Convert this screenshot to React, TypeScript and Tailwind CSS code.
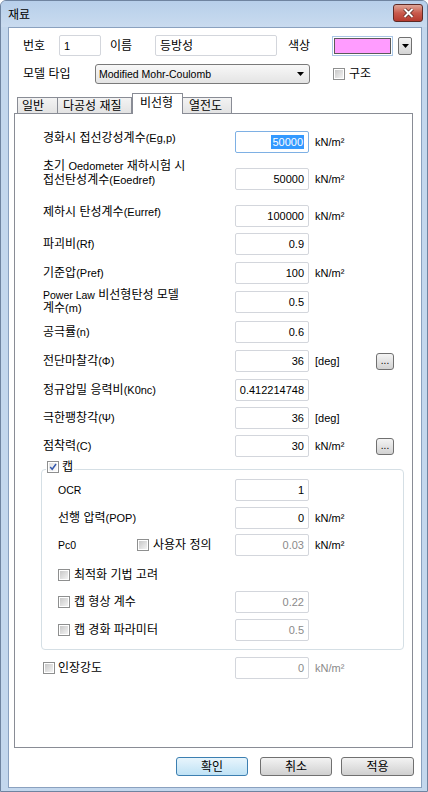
import React from "react";

type Node = React.ReactNode;

// latin bits inside korean labels are drawn a little smaller
const L = ({ children }: { children: Node }) => <span className="text-[11px]">{children}</span>;

function Check({ on }: { on?: boolean }) {
  return (
    <span className="inline-flex h-[12px] w-[12px] shrink-0 border border-[#8e8f8f] bg-white p-px">
      <span
        className={
          "flex h-full w-full items-center justify-center " +
          (on ? "bg-linear-to-br from-[#e2e2e2] to-[#fbfbfb]" : "bg-linear-to-br from-[#c8c8c8] to-[#f3f3f3]")
        }
      >
        {on && (
          <svg width="10" height="10" viewBox="0 0 10 10" className="-mt-[1px]">
            <path d="M1.5 5 L4 7.8 L8.8 1.2" fill="none" stroke="#3458ad" strokeWidth="1.8" />
          </svg>
        )}
      </span>
    </span>
  );
}

function Field({ v, dim, sel }: { v: string; dim?: boolean; sel?: boolean }) {
  return (
    <div
      className={
        "flex h-[22px] w-[74px] shrink-0 items-center justify-end rounded-[2px] border bg-white pr-[4px] text-[11px] leading-[12px] " +
        (sel ? "border-[#7eb0e4]" : "border-[#d3d6dc]") +
        (dim ? " text-[#8a8a8a]" : " text-black")
      }
    >
      {sel ? <span className="bg-[#3399ff] px-px py-px text-white">{v}</span> : v}
    </div>
  );
}

function Dots() {
  return (
    <div className="flex h-[17px] w-[18px] shrink-0 items-end justify-center rounded-[3px] border border-[#707070] bg-linear-to-b from-[#f4f4f4] to-[#d2d2d2] pb-[3px] text-[10px] leading-none">
      ...
    </div>
  );
}

function Row({
  mt,
  align = "items-center",
  label,
  labelCls = "",
  lw = "w-[192px]",
  value,
  dim,
  sel,
  unit,
  unitDim,
  dots,
}: {
  mt: string;
  align?: string;
  label: Node;
  labelCls?: string;
  lw?: string;
  value: string;
  dim?: boolean;
  sel?: boolean;
  unit?: string;
  unitDim?: boolean;
  dots?: boolean;
}) {
  return (
    <div className={"flex " + align + " " + mt}>
      <div className={lw + " shrink-0 " + labelCls}>{label}</div>
      <div className="flex items-center">
        <Field v={value} dim={dim} sel={sel} />
        <span className={"ml-[6px] w-[61px] shrink-0 text-[11px] " + (unitDim ? "text-[#8a8a8a]" : "text-black")}>
          {unit}
        </span>
        {dots && <Dots />}
      </div>
    </div>
  );
}

function Arrow() {
  return (
    <svg width="7" height="4" viewBox="0 0 7 4">
      <path d="M0 0 H7 L3.5 4 Z" fill="#000" />
    </svg>
  );
}

function Btn({ children, main, cls }: { children: Node; main?: boolean; cls: string }) {
  return (
    <div
      className={
        "flex h-[19px] items-center justify-center rounded-[3px] border " +
        cls +
        (main
          ? " border-[#3c7fb1] bg-linear-to-b from-[#e8f5fc] to-[#bfe2f5]"
          : " border-[#707070] bg-linear-to-b from-[#f3f3f3] to-[#d0d0d0]")
      }
    >
      {children}
    </div>
  );
}

export default function App() {
  return (
    <div className="h-[792px] w-[428px] overflow-hidden rounded-t-[6px] border border-[#6f84a0] bg-[#c3d7ed] font-['Liberation_Sans','Noto_Sans_CJK_KR',sans-serif] text-[12px] leading-[14px] text-black">
      {/* Title bar */}
      <div className="flex h-[26px] items-center justify-between bg-linear-to-b from-[#b7cfea] to-[#c9dbef] pl-[7px] pr-[4px]">
        <span className="pt-[2px]">재료</span>
        <div className="-mt-[3px] flex h-[18px] w-[30px] items-center justify-center rounded-[3px] border border-[#5e2a26] bg-linear-to-b from-[#dea597] via-[#c95a4d] to-[#b53a2e]">
          <svg width="13" height="10" viewBox="0 0 13 10">
            <path d="M2.5 1 L10.5 9 M10.5 1 L2.5 9" stroke="#4b1f1b" strokeWidth="3.4" />
            <path d="M2.5 1 L10.5 9 M10.5 1 L2.5 9" stroke="#fff" strokeWidth="2" />
          </svg>
        </div>
      </div>

      {/* Client area */}
      <div className="ml-[7px] mr-[5px] h-[761px] border border-[#8aa1bf] bg-white">
        {/* 번호 / 이름 / 색상 */}
        <div className="mt-[7px] flex h-[21px] items-center pl-[14px]">
          <span className="w-[36px]">번호</span>
          <div className="flex h-[21px] w-[42px] items-center rounded-[2px] border border-[#d3d6dc] pl-[4px] text-[11px]">1</div>
          <span className="ml-[9px] w-[45px]">이름</span>
          <div className="flex h-[21px] w-[122px] items-center rounded-[2px] border border-[#d3d6dc] pl-[4px]">등방성</div>
          <span className="ml-[11px] w-[44px]">색상</span>
          <div className="h-[20px] w-[61px] border border-[#a9c6e6] p-px">
            <div className="h-full w-full border border-[#5a5a5a] bg-[#ff9cff]" />
          </div>
          <div className="ml-[5px] flex h-[18px] w-[14px] items-center justify-center rounded-[2px] border border-[#707070] bg-linear-to-b from-[#f4f4f4] to-[#d4d4d4]">
            <Arrow />
          </div>
        </div>

        {/* 모델 타입 */}
        <div className="mt-[8px] flex h-[20px] items-center pl-[14px]">
          <span className="w-[72px]">모델 타입</span>
          <div className="flex h-[20px] w-[215px] items-center justify-between rounded-[3px] border border-[#7a7a7a] bg-linear-to-b from-[#f8f8f8] to-[#e4e4e4] pl-[3px] pr-[5px] text-[10.5px]">
            <span>Modified Mohr-Coulomb</span>
            <Arrow />
          </div>
          <span className="ml-[23px]">
            <Check />
          </span>
          <span className="ml-[4px]">구조</span>
        </div>

        {/* Tabs */}
        <div className="ml-[5px] mt-[9px] flex h-[20px] items-end pl-[3px]">
          <div className="h-[16px] w-[41px] border border-b-0 border-[#898c95] bg-linear-to-b from-[#f3f3f3] to-[#e3e3e3] pl-[4px] leading-[16px]">
            일반
          </div>
          <div className="h-[16px] w-[74px] border border-b-0 border-l-0 border-[#898c95] bg-linear-to-b from-[#f3f3f3] to-[#e3e3e3] pl-[5px] leading-[16px]">
            다공성 재질
          </div>
          <div className="relative z-10 -mb-px h-[21px] w-[51px] border border-b-0 border-[#898c95] bg-white pl-[7px] pt-[2px]">
            비선형
          </div>
          <div className="h-[16px] w-[49px] border border-b-0 border-l-0 border-[#898c95] bg-linear-to-b from-[#f3f3f3] to-[#e3e3e3] pl-[6px] leading-[16px]">
            열전도
          </div>
        </div>

        {/* Panel */}
        <div className="ml-[5px] h-[635px] w-[399px] border border-[#898c95] bg-white">
          <div className="pl-[28px]">
            <Row mt="mt-[17px]" align="items-start" label={<>경화시 접선강성계수<L>(Eg,p)</L></>} value="50000" sel unit="kN/m²" />
            <Row
              mt="mt-[6px]"
              align="items-end"
              labelCls="mb-[3px]"
              label={
                <>
                  초기 <L>Oedometer</L> 재하시험 시
                  <br />
                  접선탄성계수<L>(Eoedref)</L>
                </>
              }
              value="50000"
              unit="kN/m²"
            />
            <Row mt="mt-[15px]" align="items-start" label={<>제하시 탄성계수<L>(Eurref)</L></>} value="100000" unit="kN/m²" />
            <Row mt="mt-[6px]" label={<>파괴비<L>(Rf)</L></>} value="0.9" />
            <Row mt="mt-[7px]" label={<>기준압<L>(Pref)</L></>} value="100" unit="kN/m²" />
            <Row
              mt="mt-[5px]"
              labelCls="leading-[13px]"
              label={
                <>
                  <span className="text-[10.5px]">Power Law</span> 비선형탄성 모델
                  <br />
                  계수<L>(m)</L>
                </>
              }
              value="0.5"
            />
            <Row mt="mt-[6px]" label={<>공극률<L>(n)</L></>} value="0.6" />
            <Row mt="mt-[7px]" label={<>전단마찰각<L>(Φ)</L></>} value="36" unit="[deg]" dots />
            <Row mt="mt-[7px]" label={<>정규압밀 응력비<L>(K0nc)</L></>} value="0.412214748" />
            <Row mt="mt-[6px]" label={<>극한팽창각<L>(Ψ)</L></>} value="36" unit="[deg]" />
            <Row mt="mt-[6px]" label={<>점착력<L>(C)</L></>} value="30" unit="kN/m²" dots />
          </div>

          {/* 캡 group */}
          <fieldset className="ml-[26px] mt-[3px] w-[363px] rounded-[4px] border border-[#d5dfe5] pb-[8px] pl-[4px]">
            <legend className="px-px pb-[5px]">
              <span className="flex items-center gap-[3px]">
                <Check on />
                <span>캡</span>
              </span>
            </legend>
            <div className="pl-[12px]">
              <Row mt="mt-0" lw="w-[177px]" label={<span className="text-[10.5px]">OCR</span>} value="1" />
              <Row mt="mt-[6px]" lw="w-[177px]" label={<>선행 압력<L>(POP)</L></>} value="0" unit="kN/m²" />
              <Row
                mt="mt-[5px]"
                lw="w-[177px]"
                labelCls="flex items-center"
                label={
                  <>
                    <span className="w-[79px] text-[10.5px]">Pc0</span>
                    <Check />
                    <span className="ml-[4px]">사용자 정의</span>
                  </>
                }
                value="0.03"
                dim
                unit="kN/m²"
              />
              <div className="mt-[8px] flex h-[22px] items-center gap-[4px]">
                <Check />
                <span>최적화 기법 고려</span>
              </div>
              <Row
                mt="mt-[5px]"
                lw="w-[177px]"
                labelCls="flex items-center gap-[4px]"
                label={
                  <>
                    <Check />
                    <span>캡 형상 계수</span>
                  </>
                }
                value="0.22"
                dim
              />
              <Row
                mt="mt-[6px]"
                lw="w-[177px]"
                labelCls="flex items-center gap-[4px]"
                label={
                  <>
                    <Check />
                    <span>캡 경화 파라미터</span>
                  </>
                }
                value="0.5"
                dim
              />
            </div>
          </fieldset>

          <div className="pl-[28px]">
            <Row
              mt="mt-[7px]"
              labelCls="flex items-center gap-[3px]"
              label={
                <>
                  <Check />
                  <span>인장강도</span>
                </>
              }
              value="0"
              dim
              unit="kN/m²"
              unitDim
            />
          </div>
        </div>

        {/* Buttons */}
        <div className="mt-[9px] flex justify-end pr-[7px]">
          <Btn main cls="w-[72px]">확인</Btn>
          <Btn cls="ml-[12px] w-[72px]">취소</Btn>
          <Btn cls="ml-[9px] w-[73px]">적용</Btn>
        </div>
      </div>
    </div>
  );
}
